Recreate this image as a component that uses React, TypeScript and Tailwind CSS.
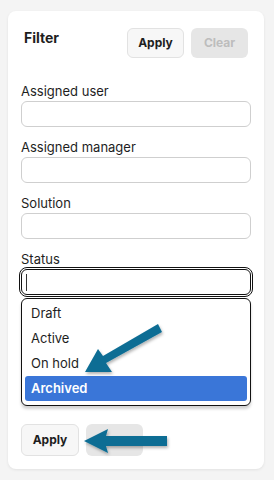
const fields = ["Assigned user", "Assigned manager", "Solution"];
const options = ["Draft", "Active", "On hold", "Archived"];

const Arrows = () => (
  <svg
    className="pointer-events-none absolute left-0 top-0 h-[480px] w-[274px]"
    viewBox="0 0 274 480"
  >
    <defs>
      <filter id="sh" x="-20%" y="-20%" width="140%" height="160%">
        <feDropShadow dx="1" dy="2" stdDeviation="1.5" floodColor="#000" floodOpacity="0.3" />
      </filter>
    </defs>
    <g fill="#0b6d94" filter="url(#sh)">
      {/* diagonal arrow */}
      <polygon points="158,324 162,332 106,363 112,372 85,372 98,349 103,356" />
      {/* horizontal arrow */}
      <polygon points="84,441 108,429 106,436 167,436 167,446 106,446 108,453" />
    </g>
  </svg>
);

const App = () => {
  return (
    <div
      className="relative h-[480px] w-[274px] bg-[#f4f4f4] pt-[11px] text-[#1e1e1e]"
      style={{ fontFamily: "Inter, 'Liberation Sans', sans-serif" }}
    >
      <div className="mx-[8px] w-[256px] rounded-[8px] bg-white px-[13px] pb-[13px] pt-[17px] shadow-[0_1px_3px_rgba(0,0,0,0.08)]">
        {/* Header */}
        <div className="flex items-start justify-between pr-[3px]">
          <h2 className="pl-[3px] text-[14px] font-bold leading-[20px]">Filter</h2>
          <div className="flex gap-[7px]">
            <button className="h-[30px] w-[57px] rounded-[6px] border border-[#e2e2e2] bg-[#f7f7f7] text-[12px] font-bold">
              Apply
            </button>
            <button className="h-[30px] w-[57px] rounded-[6px] bg-[#e6e6e6] text-[12px] font-bold text-[#bdbdbd]">
              Clear
            </button>
          </div>
        </div>

        {/* Fields */}
        <div className="mt-[25px] flex flex-col gap-[12px]">
          {fields.map((f) => (
            <div key={f} className="flex flex-col">
              <label className="text-[13px] leading-[16px]">{f}</label>
              <div className="mt-[2px] h-[26px] w-full rounded-[6px] border border-[#cfcfcf] bg-white" />
            </div>
          ))}

          <div className="flex flex-col">
            <label className="text-[13px] leading-[16px]">Status</label>
            <div className="mt-[2px] flex h-[26px] w-full items-center rounded-[6px] border border-[#111] bg-white pl-[4px] outline outline-1 outline-offset-1 outline-[#111]">
              <span className="h-[17px] w-px bg-[#333]" />
            </div>
            <div className="mt-[3px] rounded-[6px] border border-[#111] bg-white px-[3px] pb-[4px] pt-[2px] shadow-[0_3px_3px_rgba(0,0,0,0.18)]">
              {options.map((o) => (
                <div
                  key={o}
                  className={
                    o === "Archived"
                      ? "flex h-[25px] items-center rounded-[3px] bg-[#3a76d8] pl-[6px] text-[13px] font-semibold text-white"
                      : "flex h-[25px] items-center pl-[6px] text-[13px]"
                  }
                >
                  {o}
                </div>
              ))}
            </div>
          </div>
        </div>

        {/* Footer */}
        <div className="mt-[18px] flex gap-[7px]">
          <button className="h-[32px] w-[58px] rounded-[6px] border border-[#e2e2e2] bg-[#f7f7f7] text-[12px] font-bold">
            Apply
          </button>
          <div className="h-[32px] w-[57px] rounded-[6px] bg-[#e6e6e6]" />
        </div>
      </div>
      <Arrows />
    </div>
  );
};

export default App;
